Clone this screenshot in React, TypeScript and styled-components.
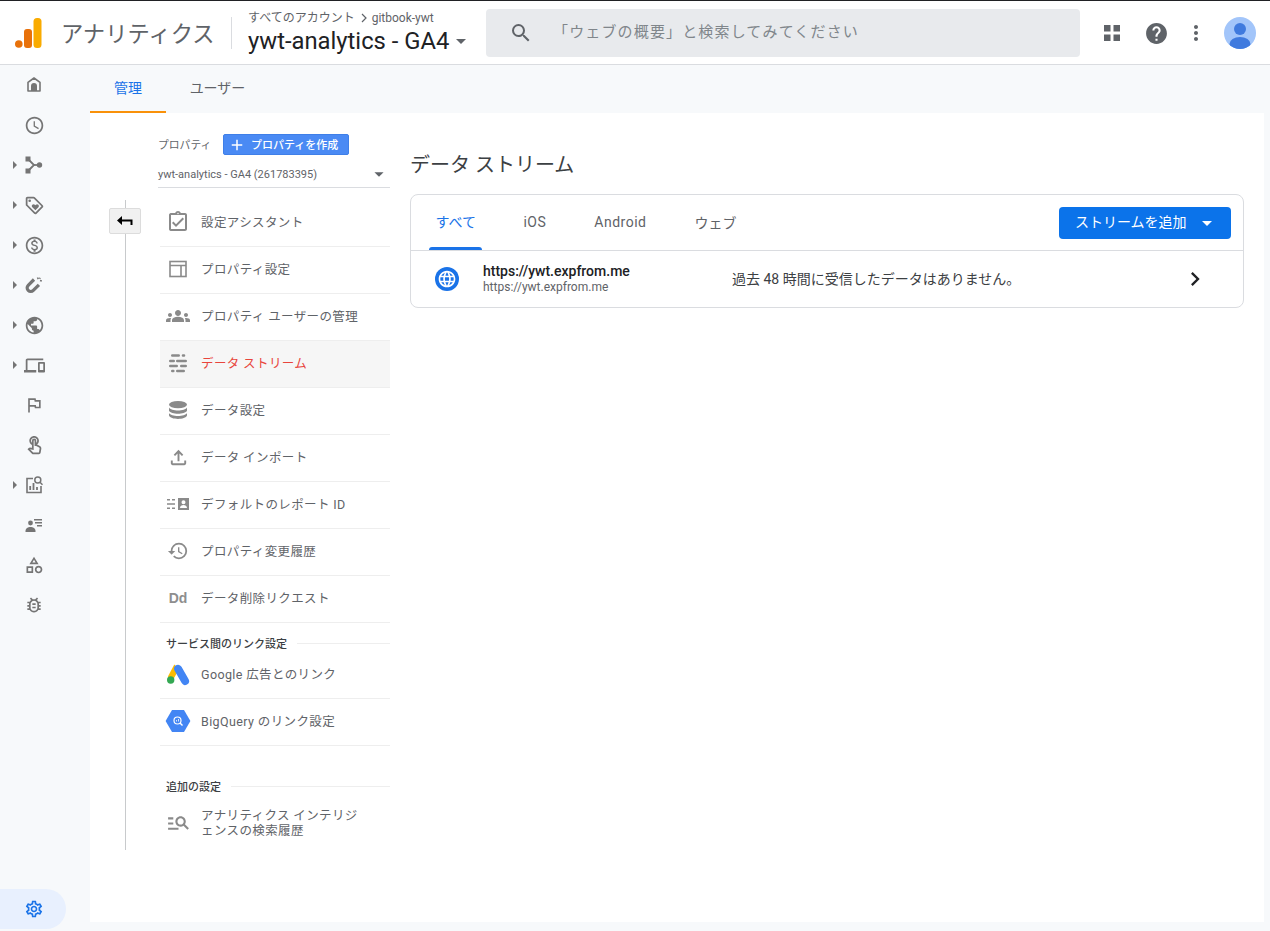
import React from "react";
import styled, { createGlobalStyle } from "styled-components";
import {
  MdOutlineAccessTime,
  MdOutlineLoyalty,
  MdOutlineMonetizationOn,
  MdPublic,
  MdOutlineDevices,
  MdOutlineAssistantPhoto,
  MdOutlineTouchApp,
  MdOutlineCategory,
  MdOutlineBugReport,
  MdOutlineSettings,
  MdOutlineAssignmentTurnedIn,
  MdGroups,
  MdOutlineFileUpload,
  MdHistory,
  MdOutlineManageSearch,
  MdSearch,
  MdHelp,
  MdMoreVert,
  MdArrowDropDown,
  MdChevronRight,
  MdAdd,
  MdLanguage,
} from "react-icons/md";

const GlobalStyle = createGlobalStyle`
  html, body {
    margin: 0;
    padding: 0;
    background: #f7f9fb;
  }
  body {
    font-family: Roboto, "Noto Sans CJK JP", sans-serif;
    color: #5f6368;
  }
  * { box-sizing: border-box; }
`;

const Page = styled.div`
  width: 1270px;
  height: 931px;
  overflow: hidden;
  display: flex;
  flex-direction: column;
`;

const Header = styled.header`
  height: 65px;
  flex: none;
  display: flex;
  align-items: center;
  background: #fff;
  border-top: 1px solid #202124;
  border-bottom: 1px solid #dadce0;
  padding: 1px 4px 0 15px;
`;

const Logo = styled.svg`
  width: 27px;
  height: 30px;
  flex: none;
`;

const ProductName = styled.div`
  margin: 0 0 3px 19px;
  width: 170px;
  font-size: 22.3px;
  color: #5f6368;
  white-space: nowrap;
`;

const HeaderDivider = styled.div`
  width: 1px;
  height: 32px;
  background: #dadce0;
`;

const PropertyPicker = styled.div`
  margin: 1px 0 0 16px;
  width: 238px;
  display: flex;
  flex-direction: column;
`;

const Breadcrumb = styled.div`
  display: flex;
  align-items: center;
  font-size: 12px;
  line-height: 14px;
  color: #5f6368;
  white-space: nowrap;
  svg {
    margin: 0 4px 0 5px;
    flex: none;
  }
`;

const PropertyName = styled.div`
  display: flex;
  align-items: center;
  font-size: 23.8px;
  line-height: 32px;
  color: #202124;
  white-space: nowrap;
  svg {
    margin-left: 0;
    color: #5f6368;
    flex: none;
  }
`;

const SearchBar = styled.div`
  width: 594px;
  height: 48px;
  display: flex;
  align-items: center;
  background: #e8eaed;
  border-radius: 4px;
  padding-left: 23px;
  color: #5f6368;
`;

const SearchText = styled.span`
  margin: 0 0 5px 20px;
  font-size: 15px;
  letter-spacing: 1.15px;
  color: #80868b;
  white-space: nowrap;
`;

const HeaderActions = styled.div`
  margin-left: auto;
  display: flex;
  align-items: center;
`;

const ActionSlot = styled.div<{ $w: number }>`
  width: ${({ $w }) => $w}px;
  display: flex;
  justify-content: center;
  color: #5f6368;
`;

const Body = styled.div`
  flex: 1;
  display: flex;
  min-height: 0;
`;

const Rail = styled.nav`
  width: 90px;
  flex: none;
  display: flex;
  flex-direction: column;
`;

const RailItems = styled.div`
  flex: 1;
`;

const RailItem = styled.div`
  height: 40px;
  width: 66px;
  position: relative;
  display: flex;
  align-items: center;
  justify-content: center;
  margin-left: 1px;
  color: #757575;
`;

const RailCaret = styled.span`
  position: absolute;
  left: 12px;
  top: 16px;
  width: 0;
  height: 0;
  border-left: 4px solid #757575;
  border-top: 4px solid transparent;
  border-bottom: 4px solid transparent;
`;

const SettingsPill = styled.div`
  width: 66px;
  height: 40px;
  margin-bottom: 2px;
  display: flex;
  align-items: center;
  justify-content: center;
  padding-left: 2px;
  background: #e8f0fe;
  border-radius: 0 20px 20px 0;
  color: #1a73e8;
`;

const Main = styled.main`
  flex: 1;
  display: flex;
  flex-direction: column;
  padding-right: 6px;
  padding-bottom: 9px;
  min-width: 0;
`;

const TopTabs = styled.div`
  height: 48px;
  flex: none;
  display: flex;
`;

const TopTab = styled.div<{ $active?: boolean }>`
  width: ${({ $active }) => ($active ? 76 : 103)}px;
  display: flex;
  align-items: center;
  justify-content: center;
  padding-bottom: 2px;
  font-size: 14px;
  color: ${({ $active }) => ($active ? "#1a73e8" : "#5f6368")};
  border-bottom: 2px solid ${({ $active }) => ($active ? "#f9910a" : "transparent")};
`;

const Panel = styled.div`
  flex: 1;
  background: #fff;
  display: flex;
  padding: 21px 20px 0 19px;
`;

const BackColumn = styled.div`
  width: 32px;
  height: 650px;
  margin-top: 66px;
  flex: none;
  position: relative;
  &::before {
    content: "";
    position: absolute;
    left: 16px;
    top: 0;
    bottom: 0;
    width: 1px;
    background: #c8cacc;
  }
`;

const BackButton = styled.div`
  position: absolute;
  left: 0;
  top: 8px;
  width: 32px;
  height: 26px;
  display: flex;
  align-items: center;
  justify-content: center;
  background: #f1f1f1;
  border: 1px solid #dcdcdc;
  border-radius: 2px;
  color: #000;
`;

const AdminColumn = styled.div`
  width: 232px;
  margin-left: 17px;
  flex: none;
`;

const PropertyHead = styled.div`
  height: 21px;
  display: flex;
  align-items: center;
  font-size: 10.8px;
  color: #5f6368;
`;

const PropertyLabel = styled.span`
  margin-bottom: 2px;
  width: 65px;
  white-space: nowrap;
`;

const CreateButton = styled.div`
  width: 126px;
  height: 21px;
  display: flex;
  align-items: center;
  padding-left: 4px;
  background: #4a8af4;
  border: 1px solid #3f7fe8;
  border-radius: 2px;
  color: #fff;
  font-size: 11px;
  font-weight: 500;
  white-space: nowrap;
  span {
    margin: 0 0 2px 5px;
  }
`;

const PropertySelect = styled.div`
  height: 33px;
  padding-top: 6px;
  display: flex;
  align-items: center;
  justify-content: space-between;
  font-size: 11px;
  color: #5f6368;
  border-bottom: 1px solid #dadce0;
  svg {
    color: #5f6368;
    flex: none;
  }
`;

const NavList = styled.div`
  margin: 12px 0 0 2px;
`;

const NavRow = styled.div<{ $active?: boolean; $plain?: boolean }>`
  height: ${({ $plain }) => ($plain ? 53 : 47)}px;
  padding: ${({ $plain }) => ($plain ? "2px 0 0" : "0 0 2px")};
  display: flex;
  align-items: center;
  border-bottom: ${({ $plain }) => ($plain ? "none" : "1px solid #eeeeee")};
  background: ${({ $active }) => ($active ? "#f6f6f6" : "transparent")};
  color: ${({ $active }) => ($active ? "#e8453c" : "#5f6368")};
  font-size: 12.5px;
  letter-spacing: 0.38px;
  line-height: 15px;
`;

const NavIcon = styled.div`
  width: 41px;
  flex: none;
  display: flex;
  justify-content: center;
  padding-right: 5px;
  color: #8a8a8a;
`;

const DdMark = styled.span`
  font-size: 14px;
  font-weight: 700;
  letter-spacing: -0.2px;
  color: #8e8e8e;
  font-family: "Liberation Sans", sans-serif;
`;

const SectionHead = styled.div<{ $top: number }>`
  margin: ${({ $top }) => $top}px 0 0 6px;
  height: 18px;
  display: flex;
  align-items: center;
  font-size: 11px;
  font-weight: 500;
  color: #3c4043;
  white-space: nowrap;
  &::after {
    content: "";
    flex: 1;
    height: 1px;
    margin-left: 10px;
    background: #eeeeee;
  }
`;

const NavText = styled.span`
  width: 165px;
`;

const Content = styled.div`
  flex: 1;
  margin-left: 20px;
  min-width: 0;
`;

const Title = styled.h1`
  margin: 17px 0 15px;
  font-size: 20px;
  font-weight: 400;
  line-height: 28px;
  color: #3c4043;
`;

const Card = styled.section`
  border: 1px solid #dadce0;
  border-radius: 8px;
  background: #fff;
`;

const CardTabs = styled.div`
  height: 56px;
  display: flex;
  align-items: center;
  padding: 0 12px 0 18px;
  border-bottom: 1px solid #dadce0;
`;

const CardTab = styled.div<{ $active?: boolean; $latin?: boolean }>`
  height: 55px;
  margin-right: 34px;
  padding: ${({ $active }) => ($active ? "0 6.5px 4px" : "0 7px 2px")};
  display: flex;
  align-items: center;
  font-size: 14px;
  letter-spacing: ${({ $latin }) => ($latin ? 0.5 : 0)}px;
  color: ${({ $active }) => ($active ? "#1a73e8" : "#5f6368")};
  position: relative;
  ${({ $active }) =>
    $active &&
    `&::after {
      content: "";
      position: absolute;
      left: 0;
      right: 0;
      bottom: 0;
      height: 3px;
      background: #1a73e8;
      border-radius: 3px 3px 0 0;
    }`}
`;

const AddStream = styled.div`
  margin-left: auto;
  width: 172px;
  height: 32px;
  display: flex;
  align-items: center;
  padding: 0 0 3px 16px;
  background: #0b73ea;
  border-radius: 4px;
  color: #fff;
  font-size: 14px;
  white-space: nowrap;
  svg {
    margin: 3px 0 0 8px;
  }
`;

const StreamRow = styled.div`
  height: 56px;
  display: flex;
  align-items: center;
  padding-left: 24px;
`;

const GlobeBadge = styled.div`
  width: 24px;
  height: 24px;
  flex: none;
  display: flex;
  align-items: center;
  justify-content: center;
  border-radius: 50%;
  background: #1a73e8;
  color: #fff;
`;

const StreamName = styled.div`
  margin-left: 24px;
  width: 249px;
  flex: none;
`;

const StreamTitle = styled.div`
  font-size: 14px;
  font-weight: 500;
  line-height: 17px;
  color: #202124;
`;

const StreamSub = styled.div`
  font-size: 12px;
  line-height: 15px;
  color: #5f6368;
`;

const StreamStatus = styled.div`
  width: 449px;
  flex: none;
  margin-bottom: 3px;
  font-size: 14px;
  color: #3c4043;
  white-space: nowrap;
`;

const RowArrow = styled.div`
  color: #202124;
  display: flex;
`;

const HomeIcon = () => (
  <svg width="20" height="20" viewBox="0 0 20 20" fill="none">
    <path d="M10 3 4 7.400V16h12V7.400L10 3z" stroke="currentColor" strokeWidth="1.600" strokeLinejoin="round" />
    <path d="M7 11a3 3 0 0 1 6 0v5H7z" fill="currentColor" />
  </svg>
);

const ForkIcon = () => (
  <svg width="20" height="20" viewBox="0 0 20 20" fill="currentColor">
    <rect x="1.500" y="1.500" width="5" height="5" />
    <rect x="1.500" y="13.500" width="5" height="5" />
    <circle cx="15.500" cy="10" r="2.700" />
    <path d="M4 4l6 6-6 6" fill="none" stroke="currentColor" strokeWidth="1.800" />
    <path d="M10 10h5" stroke="currentColor" strokeWidth="1.800" />
  </svg>
);

const MagnetIcon = () => (
  <svg width="20" height="20" viewBox="0 0 20 20" fill="none">
    <path d="M10 4.500 4.200 10.300a3.600 3.600 0 0 0 5.100 5.100l5.600-5.600" stroke="currentColor" strokeWidth="3.200" />
    <path d="M13.500 2.500l.8 1.700M16 5.500l1.800.5M16.300 2.900l-.8.8" stroke="currentColor" strokeWidth="1.600" />
  </svg>
);

const StatsSearchIcon = () => (
  <svg width="20" height="20" viewBox="0 0 20 20" fill="none" stroke="currentColor">
    <path d="M9 3.500H3v14h14V11" strokeWidth="1.600" />
    <path d="M6.200 15v-4M9.500 15V8M13 15v-3" strokeWidth="1.800" />
    <circle cx="13.800" cy="5" r="3" strokeWidth="1.500" />
    <path d="M16 7.200l2.500 2.500" strokeWidth="1.500" />
  </svg>
);

const AudienceIcon = () => (
  <svg width="20" height="20" viewBox="0 0 20 20" fill="currentColor">
    <circle cx="6.500" cy="8" r="2.400" />
    <path d="M1.500 16c0-2.600 2.600-4 5-4s5 1.400 5 4v1h-10z" />
    <path d="M10 4h8v1.400h-8zM11 7h7v1.400h-7zM13 10h5v1.400h-5z" />
  </svg>
);

const LayoutIcon = () => (
  <svg width="20" height="20" viewBox="0 0 20 20" fill="none" stroke="currentColor" strokeWidth="1.600">
    <rect x="2" y="2.500" width="16" height="15" />
    <path d="M2 6.500h16M13 6.500v11" />
  </svg>
);

const StreamIcon = () => (
  <svg width="20" height="20" viewBox="0 0 20 20" stroke="currentColor" strokeWidth="2.600" strokeLinecap="round">
    <path d="M4.300 2.500h6.400M15 2.500h1M2.300 8h3.400M9.300 8h8.400M2.300 13h6.400M13.300 13h4.400M4.300 18h1M9.300 18h6.400" />
  </svg>
);

const DatabaseIcon = () => (
  <svg width="20" height="20" viewBox="0 0 20 20" fill="currentColor">
    <ellipse cx="10" cy="4.600" rx="9" ry="3.600" />
    <path d="M1 7.400c1 2 5 3 9 3s8-1 9-3v3.400c-1 2-5 3-9 3s-8-1-9-3z" />
    <path d="M1 13c1 2 5 3 9 3s8-1 9-3v2.600c-.6 2.200-5 3.400-9 3.400s-8.400-1.200-9-3.400z" />
  </svg>
);

const ReportIdIcon = () => (
  <svg width="24" height="20" viewBox="0 0 24 20" fill="currentColor">
    <path d="M1 5h3v1.400H1zM6 5h3v1.400H6zM1 9.300h8v1.400H1zM1 13.600h3V15H1zM6 13.600h3V15H6z" />
    <path fillRule="evenodd" d="M12 4h11v12H12zm5.500 2.300a2 2 0 1 0 0 4 2 2 0 0 0 0-4zM14 14h7c0-2-1.600-3-3.500-3S14 12 14 14z" />
  </svg>
);

const AdsLogo = () => (
  <svg width="24" height="24" viewBox="0 0 24 24">
    <path d="M8.300 2.600 1.900 14.500l4.500 4.500L13 7.200z" fill="#fbbc04" />
    <path d="M10 3.300a4 4 0 0 1 5.500 1.500l7 12.300a3.900 3.900 0 0 1-6.800 3.900L8.600 8.700A4 4 0 0 1 10 3.300z" fill="#4285f4" />
    <circle cx="4.700" cy="18" r="3.700" fill="#34a853" />
  </svg>
);

const BigQueryLogo = () => (
  <svg width="26" height="24" viewBox="0 0 26 24">
    <path d="M7 1h12l6.400 11L19 23H7L.6 12z" fill="#4285f4" />
    <circle cx="12.500" cy="11.500" r="3.500" fill="none" stroke="#fff" strokeWidth="1.200" />
    <path d="M15 14l2.500 2.500" stroke="#fff" strokeWidth="1.400" />
    <path d="M11.500 12.500v-1.500M13.500 12.500v-2.500" stroke="#fff" strokeWidth=".8" />
  </svg>
);

const GridIcon = () => (
  <svg width="18" height="18" viewBox="0 0 18 18" fill="#5f6368">
    <rect x="1" y="1" width="6.500" height="6.500" />
    <rect x="10.500" y="1" width="6.500" height="6.500" />
    <rect x="1" y="10.500" width="6.500" height="6.500" />
    <rect x="10.500" y="10.500" width="6.500" height="6.500" />
  </svg>
);

const AvatarIcon = () => (
  <svg width="32" height="32" viewBox="0 0 32 32">
    <clipPath id="avatar-clip">
      <circle cx="16" cy="16" r="16" />
    </clipPath>
    <circle cx="16" cy="16" r="16" fill="#a2c5fa" />
    <circle cx="16" cy="12" r="6" fill="#3f7ade" />
    <ellipse cx="16" cy="27" rx="10.500" ry="7" fill="#3f7ade" clipPath="url(#avatar-clip)" />
  </svg>
);

const BackArrow = () => (
  <svg width="18" height="16" viewBox="0 0 18 16" fill="currentColor">
    <path d="M1 7.500 6 3v3.500h10.500V12h-2V8.500H6V12z" />
  </svg>
);

const CrumbChevron = () => (
  <svg width="8" height="10" viewBox="0 0 8 10" fill="none" stroke="currentColor" strokeWidth="1.200">
    <path d="M2 1l4 4-4 4" />
  </svg>
);

const railItems: { icon: React.ReactNode; caret?: boolean }[] = [
  { icon: <HomeIcon /> },
  { icon: <MdOutlineAccessTime size={21} /> },
  { icon: <ForkIcon />, caret: true },
  { icon: <MdOutlineLoyalty size={21} />, caret: true },
  { icon: <MdOutlineMonetizationOn size={21} />, caret: true },
  { icon: <MagnetIcon />, caret: true },
  { icon: <MdPublic size={21} />, caret: true },
  { icon: <MdOutlineDevices size={21} />, caret: true },
  { icon: <MdOutlineAssistantPhoto size={20} /> },
  { icon: <MdOutlineTouchApp size={21} /> },
  { icon: <StatsSearchIcon />, caret: true },
  { icon: <AudienceIcon /> },
  { icon: <MdOutlineCategory size={20} /> },
  { icon: <MdOutlineBugReport size={20} /> },
];

const navItems: { icon: React.ReactNode; label: string; active?: boolean }[] = [
  { icon: <MdOutlineAssignmentTurnedIn size={24} />, label: "設定アシスタント" },
  { icon: <LayoutIcon />, label: "プロパティ設定" },
  { icon: <MdGroups size={24} />, label: "プロパティ ユーザーの管理" },
  { icon: <StreamIcon />, label: "データ ストリーム", active: true },
  { icon: <DatabaseIcon />, label: "データ設定" },
  { icon: <MdOutlineFileUpload size={23} />, label: "データ インポート" },
  { icon: <ReportIdIcon />, label: "デフォルトのレポート ID" },
  { icon: <MdHistory size={22} />, label: "プロパティ変更履歴" },
  { icon: <DdMark>Dd</DdMark>, label: "データ削除リクエスト" },
];

export default function App() {
  return (
    <Page>
      <GlobalStyle />
      <Header>
        <Logo viewBox="0 0 27 30">
          <circle cx="3.800" cy="26" r="3.800" fill="#e8710a" />
          <rect x="9" y="11" width="8" height="19" rx="3" fill="#e8710a" />
          <rect x="18.500" y="0" width="8" height="30" rx="3.500" fill="#f9ab00" />
        </Logo>
        <ProductName>アナリティクス</ProductName>
        <HeaderDivider />
        <PropertyPicker>
          <Breadcrumb>
            すべてのアカウント
            <CrumbChevron />
            gitbook-ywt
          </Breadcrumb>
          <PropertyName>
            ywt-analytics - GA4
            <MdArrowDropDown size={24} />
          </PropertyName>
        </PropertyPicker>
        <SearchBar>
          <MdSearch size={24} />
          <SearchText>「ウェブの概要」と検索してみてください</SearchText>
        </SearchBar>
        <HeaderActions>
          <ActionSlot $w={44}>
            <GridIcon />
          </ActionSlot>
          <ActionSlot $w={44}>
            <MdHelp size={25} />
          </ActionSlot>
          <ActionSlot $w={36}>
            <MdMoreVert size={24} />
          </ActionSlot>
          <ActionSlot $w={52}>
            <AvatarIcon />
          </ActionSlot>
        </HeaderActions>
      </Header>
      <Body>
        <Rail>
          <RailItems>
            {railItems.map((item, i) => (
              <RailItem key={i}>
                {item.caret && <RailCaret />}
                {item.icon}
              </RailItem>
            ))}
          </RailItems>
          <SettingsPill>
            <MdOutlineSettings size={20} />
          </SettingsPill>
        </Rail>
        <Main>
          <TopTabs>
            <TopTab $active>管理</TopTab>
            <TopTab>ユーザー</TopTab>
          </TopTabs>
          <Panel>
            <BackColumn>
              <BackButton>
                <BackArrow />
              </BackButton>
            </BackColumn>
            <AdminColumn>
              <PropertyHead>
                <PropertyLabel>プロパティ</PropertyLabel>
                <CreateButton>
                  <MdAdd size={18} />
                  <span>プロパティを作成</span>
                </CreateButton>
              </PropertyHead>
              <PropertySelect>
                ywt-analytics - GA4 (261783395)
                <MdArrowDropDown size={22} />
              </PropertySelect>
              <NavList>
                {navItems.map((item) => (
                  <NavRow key={item.label} $active={item.active}>
                    <NavIcon>{item.icon}</NavIcon>
                    {item.label}
                  </NavRow>
                ))}
                <SectionHead $top={11}>サービス間のリンク設定</SectionHead>
                <NavRow>
                  <NavIcon>
                    <AdsLogo />
                  </NavIcon>
                  Google 広告とのリンク
                </NavRow>
                <NavRow>
                  <NavIcon>
                    <BigQueryLogo />
                  </NavIcon>
                  BigQuery のリンク設定
                </NavRow>
                <SectionHead $top={31}>追加の設定</SectionHead>
                <NavRow $plain>
                  <NavIcon>
                    <MdOutlineManageSearch size={25} />
                  </NavIcon>
                  <NavText>アナリティクス インテリジェンスの検索履歴</NavText>
                </NavRow>
              </NavList>
            </AdminColumn>
            <Content>
              <Title>データ ストリーム</Title>
              <Card>
                <CardTabs>
                  <CardTab $active>すべて</CardTab>
                  <CardTab $latin>iOS</CardTab>
                  <CardTab $latin>Android</CardTab>
                  <CardTab>ウェブ</CardTab>
                  <AddStream>
                    ストリームを追加
                    <MdArrowDropDown size={24} />
                  </AddStream>
                </CardTabs>
                <StreamRow>
                  <GlobeBadge>
                    <MdLanguage size={20} />
                  </GlobeBadge>
                  <StreamName>
                    <StreamTitle>https://ywt.expfrom.me</StreamTitle>
                    <StreamSub>https://ywt.expfrom.me</StreamSub>
                  </StreamName>
                  <StreamStatus>過去 48 時間に受信したデータはありません。</StreamStatus>
                  <RowArrow>
                    <MdChevronRight size={28} />
                  </RowArrow>
                </StreamRow>
              </Card>
            </Content>
          </Panel>
        </Main>
      </Body>
    </Page>
  );
}
